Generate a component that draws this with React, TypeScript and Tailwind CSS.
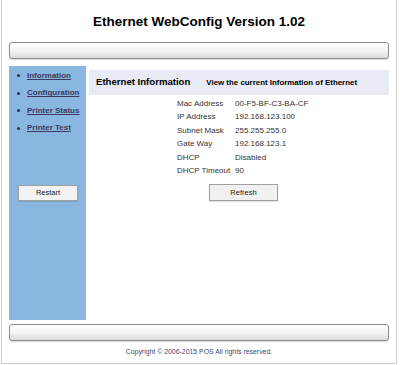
import React from "react";

const rows: [string, string][] = [
  ["Mac Address", "00-F5-BF-C3-BA-CF"],
  ["IP Address", "192.168.123.100"],
  ["Subnet Mask", "255.255.255.0"],
  ["Gate Way", "192.168.123.1"],
  ["DHCP", "Disabled"],
  ["DHCP Timeout", "90"],
];

const links = ["Information", "Configuration", "Printer Status", "Printer Test"];

function Bar({ className = "" }: { className?: string }) {
  return (
    <div
      className={`mx-[7px] h-[17px] rounded-[3px] border border-[#8c8c8c] bg-gradient-to-b from-white via-[#f4f4f4] to-[#dcdcdc] shadow-[0_1px_1px_rgba(0,0,0,0.15)] ${className}`}
    />
  );
}

export default function App() {
  return (
    <div className="w-[400px] h-[365px] bg-white font-['Liberation_Sans',Arial,sans-serif] text-[#222]">
      <div className="ml-[1px] w-[396px] h-[364px] border border-t-0 border-[#cdcdcd] flex flex-col">
        <h1 className="pt-[14px] text-center text-[13.5px] leading-[16px] font-bold text-black">
          Ethernet WebConfig Version 1.02
        </h1>
        <Bar className="mt-[12px]" />

        {/* main area */}
        <div className="mx-[7px] mt-[7px] h-[254px] flex">
          <div className="w-[77px] bg-[#8ab7df] pt-[1px] flex flex-col">
            <ul>
              {links.map((l) => (
                <li key={l} className="flex items-center h-[17.5px] pl-[8px]">
                  <span className="w-[3px] h-[3px] rounded-full bg-[#2d2d55] mr-[7px]" />
                  <a className="text-[8px] font-bold text-[#3c3a5e] underline">{l}</a>
                </li>
              ))}
            </ul>
            <button className="mt-[48px] ml-[9px] w-[60px] h-[16px] bg-[#f3f3f3] border border-[#a0a0a0] text-[7.5px] text-[#222] shadow-[0_1px_1px_rgba(0,0,0,0.1)]">
              Restart
            </button>
          </div>

          <div className="flex-1 ml-[3px] pt-[4px]">
            <div className="h-[25px] bg-[#e8ebf3] flex items-center pl-[7px]">
              <span className="text-[9.6px] font-bold text-black">Ethernet Information</span>
              <span className="ml-[16px] text-[7.9px] font-bold text-black">
                View the current Information of Ethernet
              </span>
            </div>
            <table className="ml-[88px] mt-[2px] text-[8px] text-[#333] border-collapse">
              <tbody>
                {rows.map(([k, v]) => (
                  <tr key={k} className="h-[13.5px]">
                    <td className="w-[58px] p-0 whitespace-nowrap">{k}</td>
                    <td className="p-0 whitespace-nowrap">{v}</td>
                  </tr>
                ))}
              </tbody>
            </table>
            <button className="mt-[6px] ml-[120px] w-[69px] h-[17px] bg-[#f1f1f1] border border-[#a0a0a0] text-[7.5px] text-[#222] shadow-[0_1px_1px_rgba(0,0,0,0.1)]">
              Refresh
            </button>
          </div>
        </div>

        <Bar className="mt-[4px]" />
        <p className="mt-[6px] text-center text-[6.9px] leading-[9px] text-[#3b4a6b]">
          Copyright © 2006-2015 POS All rights reserved.
        </p>
      </div>
    </div>
  );
}
